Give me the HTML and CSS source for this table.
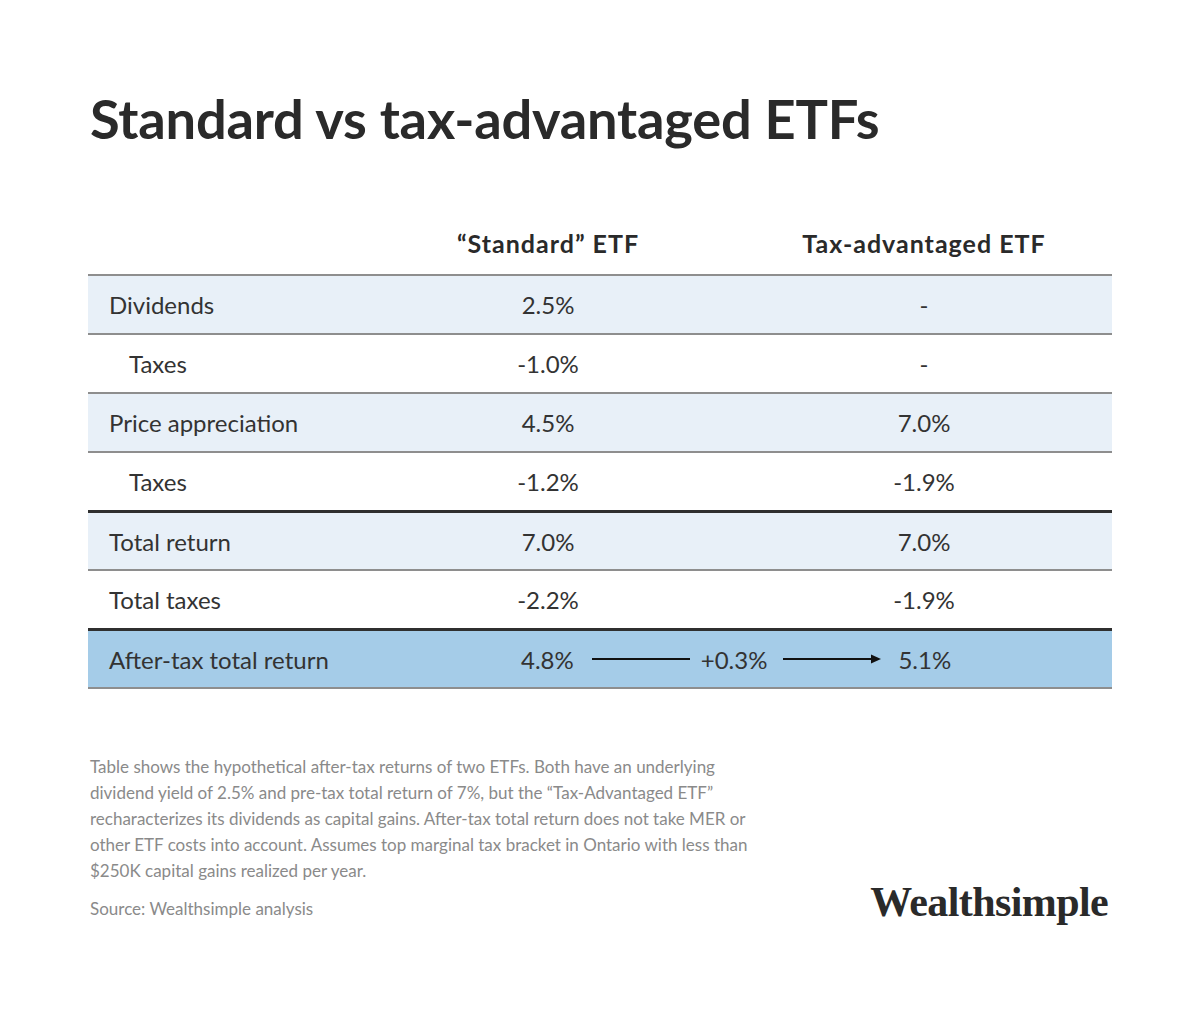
FILE: index.html
```html
<!DOCTYPE html>
<html lang="en">
<head>
<meta charset="utf-8">
<title>Standard vs tax-advantaged ETFs</title>
<link rel="stylesheet" href="styles.css">
</head>
<body>
<main class="page">
  <h1 class="title">Standard vs tax-advantaged ETFs</h1>

  <section class="table">
    <div class="row head">
      <div class="cell label"></div>
      <div class="cell num">“Standard” ETF</div>
      <div class="cell num">Tax-advantaged ETF</div>
    </div>
    <div class="row tint">
      <div class="cell label">Dividends</div>
      <div class="cell num">2.5%</div>
      <div class="cell num">-</div>
    </div>
    <div class="row">
      <div class="cell label indent">Taxes</div>
      <div class="cell num">-1.0%</div>
      <div class="cell num">-</div>
    </div>
    <div class="row tint">
      <div class="cell label">Price appreciation</div>
      <div class="cell num">4.5%</div>
      <div class="cell num">7.0%</div>
    </div>
    <div class="row">
      <div class="cell label indent">Taxes</div>
      <div class="cell num">-1.2%</div>
      <div class="cell num">-1.9%</div>
    </div>
    <div class="row tint strong">
      <div class="cell label">Total return</div>
      <div class="cell num">7.0%</div>
      <div class="cell num">7.0%</div>
    </div>
    <div class="row">
      <div class="cell label">Total taxes</div>
      <div class="cell num">-2.2%</div>
      <div class="cell num">-1.9%</div>
    </div>
    <div class="row result strong last">
      <div class="cell label">After-tax total return</div>
      <div class="cell span">
        <span class="val">4.8%</span>
        <span class="line"></span>
        <span class="delta">+0.3%</span>
        <span class="line arrow">
          <svg width="98" height="12" viewBox="0 0 98 12"><path d="M0 6H90" stroke="#111" stroke-width="2"/><path d="M88 1.5L98 6L88 10.5Z" fill="#111"/></svg>
        </span>
        <span class="val">5.1%</span>
      </div>
    </div>
  </section>

  <footer class="foot">
    <div class="notes">
      <p class="note">Table shows the hypothetical after-tax returns of two ETFs. Both have an underlying<br>dividend yield of 2.5% and pre-tax total return of 7%, but the “Tax-Advantaged ETF”<br>recharacterizes its dividends as capital gains. After-tax total return does not take MER or<br>other ETF costs into account. Assumes top marginal tax bracket in Ontario with less than<br>$250K capital gains realized per year.</p>
      <p class="source">Source: Wealthsimple analysis</p>
    </div>
    <div class="logo">Wealthsimple</div>
  </footer>
</main>
</body>
</html>
```

FILE: styles.css
```css
* { box-sizing: border-box; }
html, body { margin: 0; padding: 0; background: #fff; }
body {
  font-family: "Lato", "Noto Sans", sans-serif;
  color: #333;
}
.page {
  width: 1200px;
  height: 1012px;
  padding: 83px 88px 0 88px;
}
.title {
  margin: 0;
  font-size: 54.2px;
  line-height: 72px;
  font-weight: 700;
  color: #2a2a2a;
  letter-spacing: -0.2px;
  padding-left: 2px;
}
.table {
  margin-top: 58px;
  width: 1024px;
}
.row {
  display: grid;
  grid-template-columns: 272px 376px 376px;
  height: 59px;
  align-items: center;
  border-top: 2px solid #8e8e8e;
  font-size: 24px;
}
.row.head {
  border-top: none;
  height: 61px;
  font-weight: 700;
  font-size: 25px;
  letter-spacing: 1px;
  color: #2a2a2a;
  align-items: start;
  padding-top: 15px;
}
.row.tint { background: #e8f0f8; }
.row.result { background: #a5cce8; }
.row.strong { border-top: 3px solid #2f2f2f; }
.row.last { border-bottom: 2px solid #8e8e8e; height: 61px; }
.cell.label { padding-left: 21px; }
.cell.label.indent { padding-left: 41px; }
.cell.num { text-align: center; }
.cell.span {
  grid-column: 2 / 4;
  display: flex;
  align-items: center;
  padding-left: 161px;
}
.line {
  display: inline-block;
  width: 98px;
  height: 2px;
  background: #111;
  margin: 0 11px 0 18px;
}
.line.arrow {
  width: 98px;
  height: 12px;
  background: none;
  margin: 0 17px 0 16px;
  display: flex;
}
.foot {
  display: flex;
  justify-content: space-between;
  align-items: flex-end;
  margin-top: 65px;
}
.notes { padding-left: 2px; }
.note, .source {
  margin: 0;
  font-size: 17px;
  line-height: 26px;
  color: #8a8a8a;
  white-space: nowrap;
}
.source { margin-top: 12px; }
.logo {
  font-family: "Liberation Serif", "DejaVu Serif", serif;
  font-weight: 700;
  font-size: 42px;
  letter-spacing: -0.6px;
  color: #2a2a2a;
  margin-right: 4px;
  line-height: 40px;
}
```
